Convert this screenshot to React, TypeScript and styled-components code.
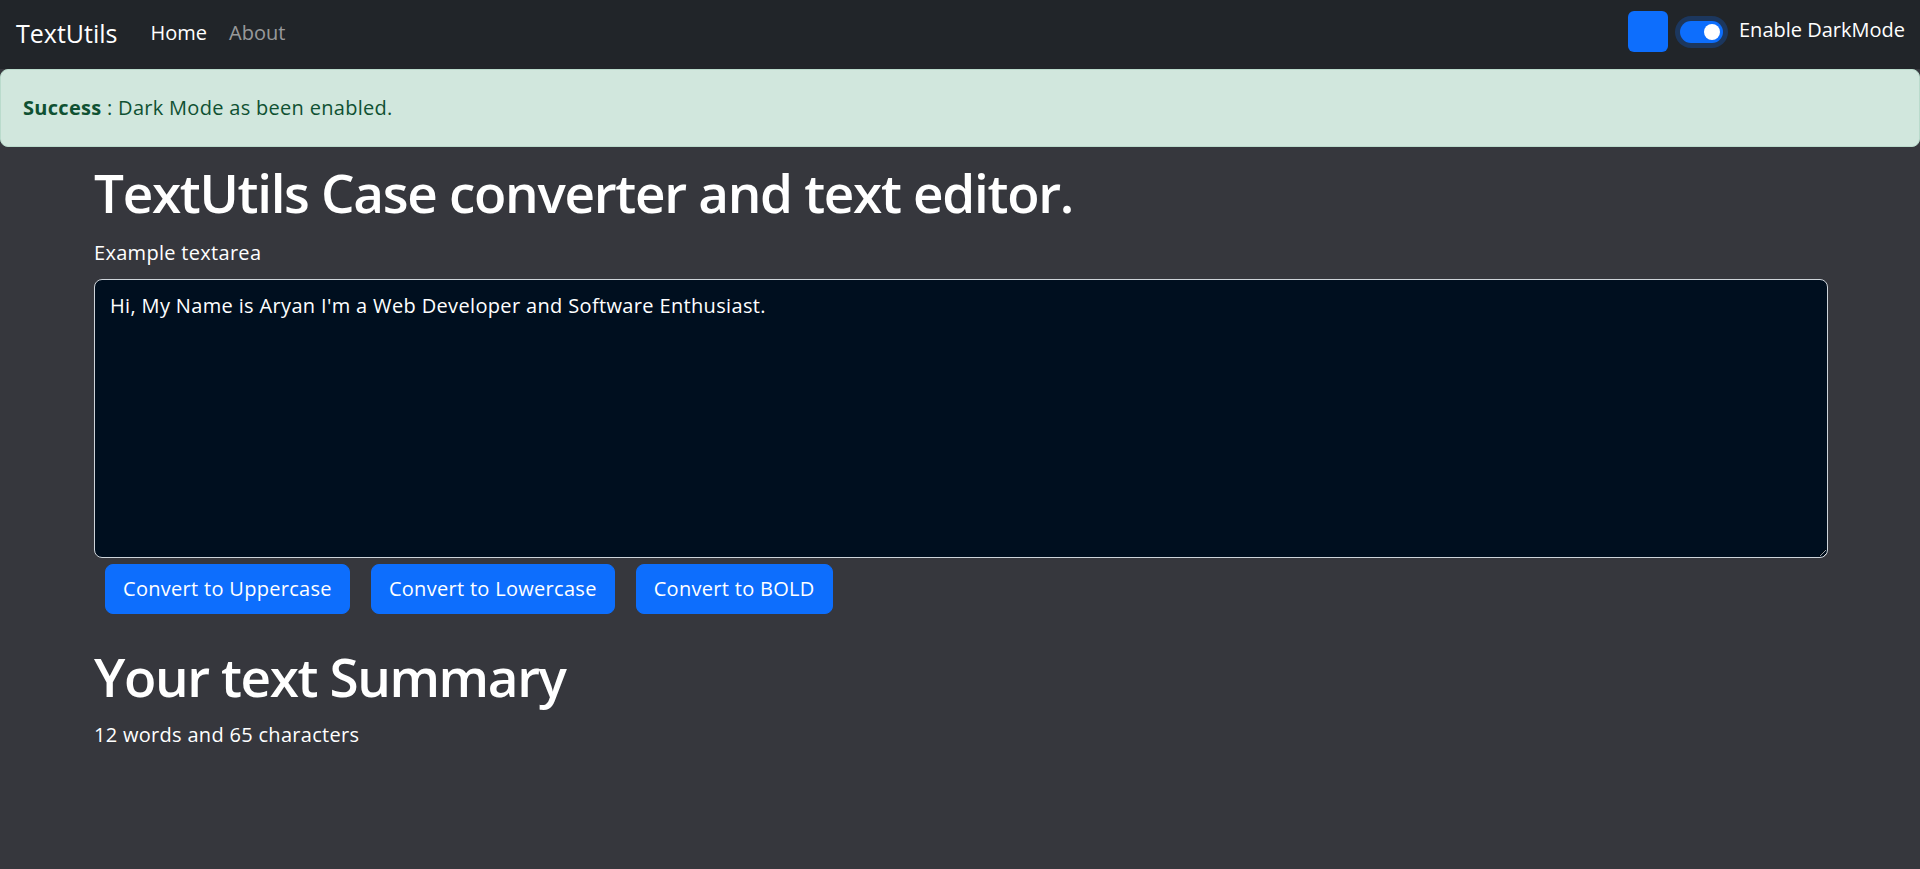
import { useState } from "react";
import styled, { createGlobalStyle } from "styled-components";

const GlobalStyle = createGlobalStyle`
    * {
        box-sizing: border-box;
    }

    body {
        margin: 0;
        background-color: #36373d;
        color: #ffffff;
        font-family: "Open Sans", "Noto Sans", sans-serif;
        font-size: 20px;
        line-height: 30px;
        letter-spacing: 0.3px;
    }
`;

const initialText = "Hi, My Name is Aryan I'm a Web Developer and Software Enthusiast.";

export default function App() {
    const [text, setText] = useState(initialText);
    const [bold, setBold] = useState(false);

    const words = text.split(/\s+/).filter((w) => w.length > 0).length;

    return (
        <>
            <GlobalStyle />
            <Navbar>
                <Brand href="#">TextUtils</Brand>
                <NavLinks>
                    <NavLink href="#" $active>Home</NavLink>
                    <NavLink href="#">About</NavLink>
                </NavLinks>
                <NavRight>
                    <ColorSwatch />
                    <Switch>
                        <SwitchKnob />
                    </Switch>
                    <SwitchLabel>Enable DarkMode</SwitchLabel>
                </NavRight>
            </Navbar>

            <AlertSlot>
                <Alert role="alert">
                    <strong>Success</strong> : Dark Mode as been enabled.
                </Alert>
            </AlertSlot>

            <Container>
                <Heading>TextUtils Case converter and text editor.</Heading>
                <Label htmlFor="myBox">Example textarea</Label>
                <TextArea
                    id="myBox"
                    value={text}
                    $bold={bold}
                    onChange={(e) => setText(e.target.value)}
                />
                <ButtonRow>
                    <Button onClick={() => setText(text.toUpperCase())}>Convert to Uppercase</Button>
                    <Button onClick={() => setText(text.toLowerCase())}>Convert to Lowercase</Button>
                    <Button onClick={() => setBold(!bold)}>Convert to BOLD</Button>
                </ButtonRow>

                <SummaryHeading>Your text Summary</SummaryHeading>
                <Summary>{words} words and {text.length} characters</Summary>
            </Container>
        </>
    );
}

const Navbar = styled.nav`
    display: flex;
    align-items: center;
    height: 69px;
    padding: 0 15px 0 16px;
    background-color: #212529;
`;

const Brand = styled.a`
    color: #ffffff;
    font-size: 25px;
    line-height: 36px;
    letter-spacing: 0;
    text-decoration: none;
    margin: 0 33px 4px 0;
`;

const NavLinks = styled.div`
    display: flex;
    gap: 22px;
    margin-bottom: 4px;
`;

const NavLink = styled.a<{ $active?: boolean }>`
    color: ${(p) => (p.$active ? "#ffffff" : "rgba(255, 255, 255, 0.55)")};
    font-size: 20px;
    letter-spacing: 0;
    text-decoration: none;
`;

const NavRight = styled.div`
    display: flex;
    align-items: center;
    margin-left: auto;
    margin-bottom: 6px;
`;

const ColorSwatch = styled.div`
    width: 40px;
    height: 41px;
    border-radius: 6px;
    background-color: #0d6efd;
    margin-right: 12px;
`;

const Switch = styled.div`
    display: flex;
    align-items: center;
    justify-content: flex-end;
    width: 43px;
    height: 22px;
    padding: 0 3px;
    border-radius: 11px;
    background-color: #0d6efd;
    box-shadow: 0 0 0 5px #1c375e;
    margin-right: 16px;
`;

const SwitchKnob = styled.span`
    width: 16px;
    height: 16px;
    border-radius: 50%;
    background-color: #ffffff;
`;

const SwitchLabel = styled.label`
    color: #ffffff;
    font-size: 20px;
    letter-spacing: 0;
    margin-bottom: 4px;
`;

const AlertSlot = styled.div`
    height: 78px;
`;

const Alert = styled.div`
    height: 78px;
    padding: 23px 22px;
    color: #0f5132;
    background-color: #d1e7dd;
    border: 1px solid #badbcc;
    border-radius: 8px;
    font-size: 20px;
    line-height: 30px;

    strong {
        font-weight: 700;
    }
`;

const Container = styled.div`
    padding: 0 92px 0 94px;
`;

const Heading = styled.h1`
    margin: 13px 0 12px;
    font-size: 53px;
    line-height: 66px;
    font-weight: 600;
    letter-spacing: -1.3px;
`;

const Label = styled.label`
    display: block;
    margin-bottom: 11px;
    font-size: 20px;
    line-height: 30px;
`;

const TextArea = styled.textarea<{ $bold?: boolean }>`
    display: block;
    width: 100%;
    height: 279px;
    padding: 11px 15px 9px;
    color: #ffffff;
    background-color: #000f1f;
    border: 1px solid #ced4da;
    border-radius: 8px;
    font-family: inherit;
    font-size: 20px;
    line-height: 30px;
    letter-spacing: 0.35px;
    font-weight: ${(p) => (p.$bold ? 700 : 400)};
    resize: vertical;
    outline: none;
`;

const ButtonRow = styled.div`
    display: flex;
    gap: 21px;
    margin: 6px 0 0 11px;
`;

const Button = styled.button`
    height: 50px;
    padding: 0 17px;
    color: #ffffff;
    background-color: #0d6efd;
    border: 1px solid #0d6efd;
    border-radius: 8px;
    font-family: inherit;
    font-size: 20px;
    line-height: 30px;
    letter-spacing: 0.3px;
    cursor: pointer;
`;

const SummaryHeading = styled.h2`
    margin: 30px 0 10px;
    font-size: 53px;
    line-height: 66px;
    font-weight: 600;
    letter-spacing: -1.4px;
`;

const Summary = styled.p`
    margin: 0;
    font-size: 20px;
    line-height: 30px;
`;
